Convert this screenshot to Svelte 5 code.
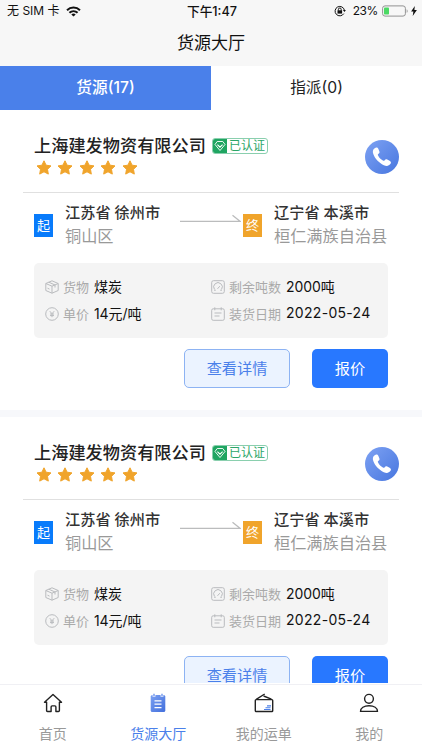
<script lang="ts">
	interface Cargo {
		id: number;
		company: string;
		from: string;
		fromArea: string;
		to: string;
		toArea: string;
		goods: string;
		remaining: string;
		price: string;
		date: string;
	}

	const order: Omit<Cargo, 'id'> = {
		company: '上海建发物资有限公司',
		from: '江苏省 徐州市',
		fromArea: '铜山区',
		to: '辽宁省 本溪市',
		toArea: '桓仁满族自治县',
		goods: '煤炭',
		remaining: '2000吨',
		price: '14元/吨',
		date: '2022-05-24'
	};

	const cargos: Cargo[] = [
		{ id: 1, ...order },
		{ id: 2, ...order }
	];

	const tabs = ['货源(17)', '指派(0)'];
	const navItems = [
		{ key: 'home', label: '首页' },
		{ key: 'hall', label: '货源大厅' },
		{ key: 'orders', label: '我的运单' },
		{ key: 'mine', label: '我的' }
	];

	let activeTab = $state(0);
	let activeNav = $state('hall');
</script>

{#snippet field(icon: string, label: string, value: string)}
	<div class="field">
		<svg class="field-icon" viewBox="0 0 14 14" fill="none" stroke="#b9bbbe" stroke-width="1">
			{#if icon === 'box'}
				<path d="M7 .8 13.2 3.5v7L7 13.2.8 10.5v-7zM.8 3.5 7 6.2l6.2-2.7M7 6.2v7M3.8 2.2 10 5v2.5M2.5 8.2l2 .9" />
			{:else if icon === 'gauge'}
				<rect x=".7" y=".7" width="12.6" height="12.6" rx="1.8" />
				<path d="M3.4 9.3a4.3 4.3 0 1 1 7.2 0M6.5 8.8l2.3-2.6M3 10.2h1.8M9.2 10.2H11" />
			{:else if icon === 'yen'}
				<circle cx="7" cy="7" r="6.3" />
				<path d="M4.8 4.2 7 6.7l2.2-2.5M7 6.7v3.5M5 7h4M5 8.6h4" />
			{:else}
				<rect x=".7" y="1.8" width="12.6" height="11.5" rx="1.5" />
				<path d="M3.8.3v3M10.2.3v3M3.5 6h7M3.5 9h5" />
			{/if}
		</svg>
		<span class="field-label">{label}</span>
		<span class="field-value" class:date={icon === 'calendar'}>{value}</span>
	</div>
{/snippet}

<div class="screen">
	<header class="header">
		<div class="status-bar">
			<div class="status-left">
				<span>无 SIM 卡</span>
				<svg width="15" height="11" viewBox="0 0 15 11" fill="none" stroke="#111" stroke-width="2">
					<path d="M1 4.2a9.4 9.4 0 0 1 13 0M3.4 6.8a6 6 0 0 1 8.2 0" />
					<path d="M7.5 10.6 5.3 8.5a3.2 3.2 0 0 1 4.4 0z" fill="#111" stroke="none" />
				</svg>
			</div>
			<div class="status-time">下午1:47</div>
			<div class="status-right">
				<svg width="12" height="12" viewBox="0 0 12 12" fill="none" stroke="#111" stroke-width="1">
					<path d="M9.8 8.6a4.7 4.7 0 1 1 .6-3.4" />
					<path d="m8.9 5.1 3 0-1.4 2z" fill="#111" stroke="none" />
					<rect x="3.5" y="5.3" width="4.6" height="3.3" fill="#111" stroke="none" />
					<path d="M4.4 5.6V4.4a1.4 1.4 0 0 1 2.8 0v1.2" />
				</svg>
				<span class="percent">23%</span>
				<svg width="26" height="12" viewBox="0 0 26 12">
					<rect x=".6" y=".9" width="22.8" height="10.2" rx="2.4" fill="none" stroke="#929292" />
					<rect x="2" y="2.4" width="5" height="7.2" rx=".8" fill="#4cd964" />
					<path d="M24.7 4.2c1.2.5 1.2 3.1 0 3.6z" fill="#929292" />
				</svg>
				<svg class="bolt" width="6" height="10" viewBox="0 0 6 10">
					<path d="M3.8 0 .1 5.6h2.3L1.7 10 5.9 4H3.4z" fill="#111" />
				</svg>
			</div>
		</div>
		<h1 class="title">货源大厅</h1>
	</header>

	<div class="tabs">
		{#each tabs as tab, i}
			<button class="tab" class:active={activeTab === i} onclick={() => (activeTab = i)}>{tab}</button>
		{/each}
	</div>

	<main class="list">
		{#each cargos as cargo (cargo.id)}
			<article class="card">
				<div class="card-head">
					<div>
						<div class="company-row">
							<h2 class="company">{cargo.company}</h2>
							<span class="verified">
								<span class="verified-icon">
									<svg width="12" height="12" viewBox="0 0 12 12" fill="none" stroke="#fff" stroke-width=".9">
										<path d="M3.2 1.5h5.6L11 4.5l-5 6-5-6z" />
										<path d="m3.4 4.7 2.6 2.5 2.6-2.5" stroke-width="1.1" />
									</svg>
								</span>
								<span class="verified-text">已认证</span>
							</span>
						</div>
						<div class="stars">
							{#each Array(5) as _}
								<svg width="16" height="15" viewBox="0 0 16 15">
									<path
										d="m8 .8 2.1 4.4 4.9.7-3.5 3.4.8 4.8L8 11.8l-4.3 2.3.8-4.8L1 5.9l4.9-.7z"
										fill="#f0a42b"
										stroke="#f0a42b"
										stroke-width="1"
										stroke-linejoin="round"
									/>
								</svg>
							{/each}
						</div>
					</div>
					<button class="call" aria-label="电话">
						<svg width="20" height="20" viewBox="0 0 20 20">
							<path
								d="M2.7 1.2C4.2.1 5.6.4 6.4 2l1 2.4c.4 1.1-.1 1.8-1.2 2.6-.5.4-.4 1 0 1.7 1 2 2.6 3.7 4.7 4.8.7.4 1.2.4 1.6-.1.8-1 1.6-1.4 2.7-.9l2.4 1.2c1.5.8 1.8 2 .7 3.4-1.5 1.9-3.6 2.3-6.5 1.1C6.9 15.800 3 11.700 1.300 7 .4 4.400.8 2.500 2.700 1.200z"
								fill="#fff"
							/>
						</svg>
					</button>
				</div>

				<div class="route">
					<span class="mark start">起</span>
					<div class="place from">
						<div class="city">{cargo.from}</div>
						<div class="area">{cargo.fromArea}</div>
					</div>
					<svg class="arrow" width="61" height="9" viewBox="0 0 61 9" fill="none" stroke="#bbbcbd" stroke-width="1.3">
						<path d="M0 7.3H60L52.5 1.2" />
					</svg>
					<span class="mark end">终</span>
					<div class="place">
						<div class="city">{cargo.to}</div>
						<div class="area">{cargo.toArea}</div>
					</div>
				</div>

				<div class="info">
					{@render field('box', '货物', cargo.goods)}
					{@render field('gauge', '剩余吨数', cargo.remaining)}
					{@render field('yen', '单价', cargo.price)}
					{@render field('calendar', '装货日期', cargo.date)}
				</div>

				<div class="actions">
					<button class="btn detail">查看详情</button>
					<button class="btn quote">报价</button>
				</div>
			</article>
		{/each}
	</main>

	<nav class="navbar">
		{#each navItems as item}
			<button class="nav-item" class:active={activeNav === item.key} onclick={() => (activeNav = item.key)}>
				<svg width="20" height="20" viewBox="0 0 20 20" fill="none" stroke="#222" stroke-width="1.4" stroke-linejoin="round">
					{#if item.key === 'home'}
						<path d="M3.6 9.3H1.5L10 1.6l8.5 7.7h-2.1v8.2q0 1-1 1h-2.5v-4.6q0-1-1-1H9.100q-1 0-1 1v4.600H4.600q-1 0-1-1z" />
					{:else if item.key === 'hall'}
						<defs>
							<linearGradient id="hall" x1="0" y1="0" x2="1" y2="1">
								<stop offset="0" stop-color="#7ba0f2" />
								<stop offset="1" stop-color="#426fdc" />
							</linearGradient>
						</defs>
						<rect x="2.7" y="2" width="14.6" height="17" rx="1.6" fill="url(#hall)" stroke="none" />
						<path d="M6 .7v3M14 .7v3" stroke="#fff" stroke-width="2.8" />
						<path d="M6 .7v2.6M14 .7v2.6" stroke="#6f96ee" stroke-width="1.4" />
						<path d="M6.5 7.8h7M6.5 11.2h7M6.5 14.6h7" stroke="#fff" stroke-width="1.3" />
					{:else if item.key === 'orders'}
						<rect x="1.3" y="6.6" width="17.4" height="11.9" rx=".8" />
						<path d="M2.2 6.4 10.7 1M9.6 3l7.8 3.2" />
						<path d="M13 12.900h4M11.500 14.700h5M10 16.500h6.500" stroke="#4c80e8" stroke-width="1.100" />
					{:else}
						<circle cx="10" cy="5.8" r="4.4" />
						<path d="M1.5 18.4c0-3.5 3.5-5.7 8.5-5.7s8.5 2.2 8.5 5.7z" />
					{/if}
				</svg>
				<span>{item.label}</span>
			</button>
		{/each}
	</nav>
</div>

<style>
	:global(body) {
		background: #fff;
	}

	.screen {
		display: flex;
		flex-direction: column;
		width: 422px;
		height: 750px;
		overflow: hidden;
		font-family: Inter, 'Noto Sans CJK SC', sans-serif;
		color: #222;
		background: #fff;
	}

	button {
		padding: 0;
		border: none;
		background: none;
		font-family: inherit;
		cursor: pointer;
	}

	h1,
	h2 {
		margin: 0;
	}

	.header {
		flex: none;
		height: 65.5px;
		background: #f7f7f7;
		color: #111;
	}

	.status-bar {
		display: grid;
		grid-template-columns: 1fr auto 1fr;
		align-items: center;
		height: 22px;
		padding: 0 5px 0 7px;
		font-size: 12px;
		line-height: 20px;
	}

	.status-left,
	.status-right {
		display: flex;
		align-items: center;
		white-space: nowrap;
	}

	.status-left {
		gap: 6px;
	}

	.status-right {
		justify-content: flex-end;
	}

	.status-time {
		padding-top: 1px;
		font-weight: 500;
		font-size: 12.7px;
	}

	.percent {
		margin: 0 4px 0 7px;
		letter-spacing: -0.4px;
	}

	.bolt {
		margin-left: 3px;
	}

	.title {
		height: 43px;
		font-size: 17px;
		font-weight: 400;
		line-height: 42px;
		text-align: center;
	}

	.tabs {
		display: flex;
		flex: none;
		height: 44.5px;
	}

	.tab {
		flex: 1;
		padding-bottom: 3px;
		font-size: 15.7px;
		color: #222;
		background: #fff;
	}

	.tab.active {
		font-weight: 500;
		color: #fff;
		background: #4a80ea;
	}

	.list {
		flex: 1;
		min-height: 0;
		overflow: hidden;
	}

	.card {
		box-sizing: border-box;
		height: 307px;
		border-bottom: 7px solid #f7f8fb;
	}

	.card-head {
		display: flex;
		justify-content: space-between;
		box-sizing: border-box;
		height: 83px;
		margin: 0 23px;
		padding: 24px 0 0 11px;
		border-bottom: 1px solid #e0e0e0;
	}

	.company-row {
		display: flex;
		align-items: center;
		gap: 6px;
		height: 24px;
	}

	.company {
		font-size: 17.2px;
		font-weight: 500;
		line-height: 24px;
		color: #222;
	}

	.verified {
		display: flex;
		box-sizing: border-box;
		width: 56px;
		height: 16px;
		margin-bottom: 1px;
		border: 1px solid #8acfae;
		border-radius: 3px;
		overflow: hidden;
	}

	.verified-icon {
		display: flex;
		align-items: center;
		justify-content: center;
		width: 14px;
		background: #1fa561;
	}

	.verified-text {
		flex: 1;
		font-size: 12px;
		line-height: 14px;
		text-align: center;
		color: #2ba668;
	}

	.stars {
		display: flex;
		gap: 5.4px;
		margin: 2px 0 0 2px;
	}

	.call {
		display: flex;
		align-items: center;
		justify-content: center;
		width: 34px;
		height: 34px;
		margin-top: 6px;
		border-radius: 50%;
		background: linear-gradient(135deg, #7ea2f3, #4776df);
	}

	.route {
		display: flex;
		height: 70px;
		padding-left: 34px;
		white-space: nowrap;
	}

	.mark {
		width: 19px;
		height: 23px;
		margin-top: 20.5px;
		font-size: 13px;
		line-height: 22px;
		text-align: center;
		color: #fff;
	}

	.mark.start {
		background: #087bfb;
	}

	.mark.end {
		margin-left: 2px;
		background: #f0a42b;
	}

	.place {
		padding-top: 8px;
		margin-left: 12px;
	}

	.place.from {
		width: 115px;
	}

	.city {
		font-size: 15.2px;
		font-weight: 500;
		line-height: 24px;
		color: #333;
	}

	.area {
		font-size: 16.2px;
		line-height: 23px;
		color: #999;
	}

	.arrow {
		margin-top: 21px;
	}

	.info {
		display: grid;
		grid-template-columns: 166px 1fr;
		grid-template-rows: 26.5px 26.5px;
		box-sizing: border-box;
		height: 75px;
		margin: 0 34px;
		padding: 11px 0 0 11px;
		border-radius: 5px;
		background: #f4f4f4;
	}

	.field {
		display: flex;
		align-items: center;
		white-space: nowrap;
	}

	.field-icon {
		width: 14px;
		height: 14px;
	}

	.field-label {
		margin: 0 5px 1px 4px;
		font-size: 13px;
		color: #aaa;
	}

	.field-value {
		margin-bottom: 2px;
		font-size: 14px;
		letter-spacing: -0.1px;
		color: #111;
	}

	.field-value.date {
		letter-spacing: 0.3px;
	}

	.actions {
		display: flex;
		justify-content: flex-end;
		gap: 22px;
		padding: 11px 34px 0;
	}

	.btn {
		box-sizing: border-box;
		height: 39px;
		padding-bottom: 3px;
		border-radius: 5px;
		font-size: 15.2px;
	}

	.detail {
		width: 106px;
		border: 1px solid #8db3f3;
		color: #4a80ea;
		background: #ebf3ff;
	}

	.quote {
		width: 76px;
		color: #fff;
		background: #2878ff;
	}

	.navbar {
		display: flex;
		flex: none;
		box-sizing: border-box;
		height: 67px;
		padding-top: 1px;
		background: #fff;
		box-shadow: inset 0 1px #fff, inset 0 2px #f0f0f4;
	}

	.nav-item {
		display: flex;
		flex: 1;
		flex-direction: column;
		align-items: center;
		padding-top: 9px;
		font-size: 14px;
		line-height: 20px;
		color: #999;
	}

	.nav-item span {
		margin-top: 11px;
	}

	.nav-item.active {
		color: #4a80ea;
	}
</style>
